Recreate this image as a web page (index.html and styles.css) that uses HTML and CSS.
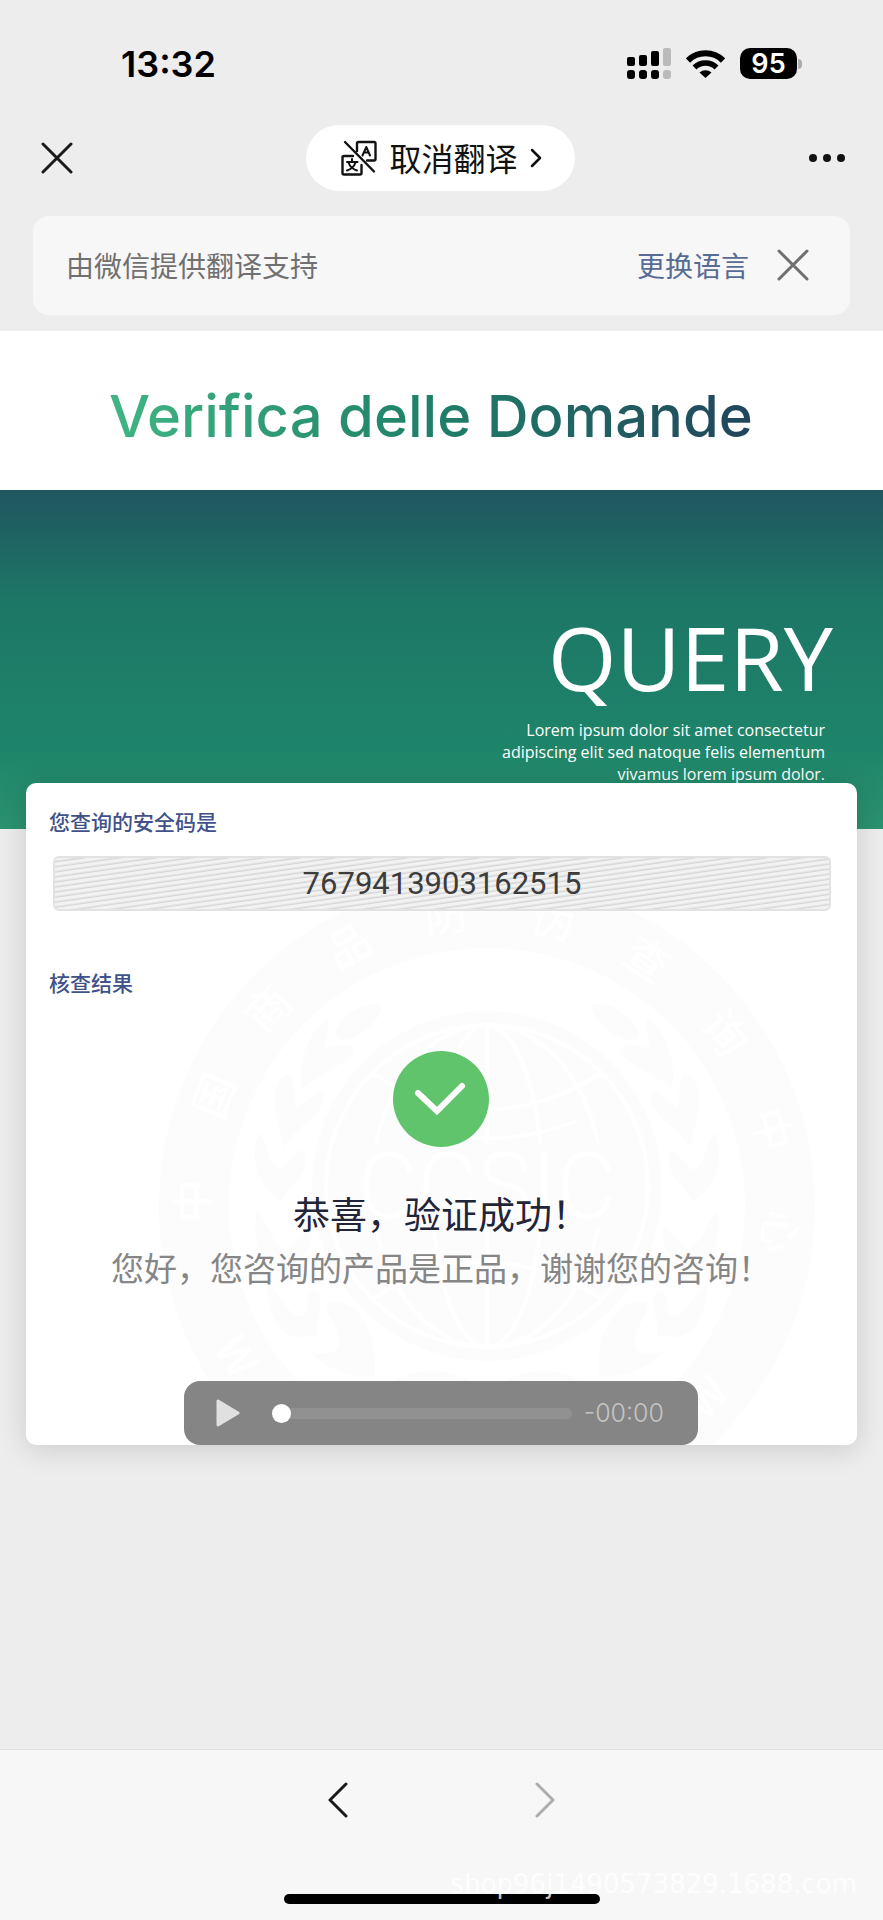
FILE: index.html
```html
<!DOCTYPE html>
<html lang="zh-CN">
<head>
    <meta charset="UTF-8">
    <meta name="viewport" content="width=device-width, initial-scale=1.0">
    <title>Verifica delle Domande</title>
    <link rel="stylesheet" href="styles.css">
</head>
<body>

    <div class="status-bar">
        <span class="time">13:32</span>
        <div class="status-icons">
            <svg width="44" height="31" viewBox="0 0 44 31">
                <g fill="#000">
                    <rect x="0" y="9" width="8" height="9" rx="2"/>
                    <rect x="12" y="7" width="8" height="11" rx="2"/>
                    <rect x="24" y="3" width="8" height="15" rx="2"/>
                    <rect x="0" y="22" width="8" height="9" rx="3"/>
                    <rect x="12" y="22" width="8" height="9" rx="3"/>
                    <rect x="24" y="22" width="8" height="9" rx="3"/>
                </g>
                <g fill="#bababa">
                    <rect x="36" y="0" width="8" height="18" rx="2"/>
                    <rect x="36" y="22" width="8" height="9" rx="3"/>
                </g>
            </svg>
            <svg class="wifi" width="39" height="28" viewBox="0 0 39 28">
                <path d="M2 10.500A25 25 0 0 1 37 10.500" fill="none" stroke="#000" stroke-width="6"/>
                <path d="M8.500 17.500A15.500 15.500 0 0 1 30.500 17.500" fill="none" stroke="#000" stroke-width="5.500"/>
                <path d="M13.500 22.500A9 9 0 0 1 25.500 22.500L19.500 28Z" fill="#000"/>
            </svg>
            <div class="battery"><span>95</span></div>
        </div>
    </div>

    <div class="nav-bar">
        <button class="icon-btn" aria-label="关闭">
            <svg width="32" height="32" viewBox="0 0 32 32"><path d="M2 2L30 30M30 2L2 30" stroke="#1a1a1a" stroke-width="3" stroke-linecap="round"/></svg>
        </button>
        <button class="translate-btn">
            <svg width="36" height="36" viewBox="0 0 36 36" fill="none" stroke="#111" stroke-width="2.400" stroke-linecap="round" stroke-linejoin="round">
                <path d="M16 11V3.500Q16 2 17.500 2H33Q34.500 2 34.500 3.500V19Q34.500 20.500 33 20.500H26"/>
                <path d="M12 16H3Q1.500 16 1.500 17.500V33Q1.500 34.500 3 34.500H19Q20.500 34.500 20.500 33V25"/>
                <path d="M4 2L33 31.500"/>
                <path d="M21.500 15.500L25.300 7L29 15.500M23 12.500H27.500" stroke-width="2"/>
                <path d="M11 19V21.500M6 22H16.500M7.500 22.500Q9.500 28.500 16 30.500M14.500 22.500Q12.500 28.500 6 30.500" stroke-width="2"/>
            </svg>
            <span>取消翻译</span>
            <svg width="12" height="20" viewBox="0 0 12 20" fill="none" stroke="#111" stroke-width="2.500" stroke-linecap="round" stroke-linejoin="round"><path d="M2 2L10 10L2 18"/></svg>
        </button>
        <button class="icon-btn" aria-label="更多">
            <svg width="38" height="10" viewBox="0 0 38 10" fill="#111"><circle cx="5" cy="5" r="4"/><circle cx="19" cy="5" r="4"/><circle cx="33" cy="5" r="4"/></svg>
        </button>
    </div>

    <div class="notice">
        <p>由微信提供翻译支持</p>
        <a href="#">更换语言</a>
        <button class="icon-btn" aria-label="关闭提示">
            <svg width="32" height="32" viewBox="0 0 32 32"><path d="M2 2L30 30M30 2L2 30" stroke="#707070" stroke-width="3" stroke-linecap="round"/></svg>
        </button>
    </div>

    <header class="site-header">
        <h1>Verifica delle Domande</h1>
    </header>

    <main>
        <section class="banner">
            <h2>QUERY</h2>
            <p>Lorem ipsum dolor sit amet consectetur<br>adipiscing elit sed natoque felis elementum<br>vivamus lorem ipsum dolor.</p>
        </section>

        <section class="card">
            <svg class="seal" width="656" height="656" viewBox="-328 -328 656 656" aria-hidden="true">
                <defs>
                    <g id="laurel">
                        <path d="M-105 -201C-120 -206 -146 -192 -152 -172C-150 -162 -136 -166 -124 -174C-114 -182 -104 -192 -105 -201Z"/>
                        <path d="M-159 -187C-178 -176 -190 -144 -185 -118C-172 -128 -148 -140 -135 -150C-130 -158 -136 -164 -148 -161L-162 -158C-162 -168 -158 -178 -159 -187Z"/>
                        <path d="M-197 -131C-208 -132 -214 -116 -212 -104C-212 -90 -206 -76 -204 -58C-192 -78 -170 -88 -164 -103C-162 -114 -168 -118 -176 -108L-191 -98C-194 -108 -190 -124 -197 -131Z"/>
                        <path d="M-229 -73C-234 -54 -234 -36 -222 -20C-216 -12 -210 -8 -205 -4C-200 -18 -184 -28 -182 -42C-180 -54 -184 -60 -190 -52L-206 -36C-222 -42 -216 -64 -229 -73Z"/>
                        <path d="M-230 6C-236 30 -226 56 -210 66L-196 78C-194 60 -180 50 -176 36C-174 22 -178 18 -184 28L-200 44C-218 36 -218 16 -230 6Z"/>
                        <path d="M-220 78C-220 104 -210 126 -194 130C-184 134 -176 126 -170 133C-172 112 -164 104 -168 88C-176 78 -180 92 -182 110C-200 112 -206 88 -220 78Z"/>
                        <path d="M-160 97C-156 94 -142 95 -132 104C-116 120 -110 142 -112 170C-128 172 -156 168 -176 146C-160 150 -146 148 -148 132C-150 118 -162 110 -160 97Z"/>
                        <path d="M-90 174C-70 160 -24 162 -8 184C-30 200 -70 204 -110 192Z"/>
                    </g>
                </defs>
                <circle r="293" fill="none" stroke="#fcfcfc" stroke-width="70"/>
                <g fill="#fcfcfc">
                    <use href="#laurel"/>
                    <use href="#laurel" transform="scale(-1 1)"/>
                    <circle cy="-20" r="175"/>
                </g>
                <g fill="none" stroke="#fff" stroke-width="4">
                    <circle cy="-20" r="161"/>
                    <ellipse cy="-20" rx="55" ry="161"/>
                    <ellipse cy="-20" rx="115" ry="161"/>
                    <path d="M0 -181V141M-115 -133Q0 -60 115 -133M-90 -85Q0 -50 90 -85M-115 93Q0 20 115 93"/>
                </g>
                <rect x="-140" y="-62" width="280" height="84" fill="#fcfcfc"/>
                <g fill="#fff" text-anchor="middle">
                    <text class="seal-name" y="12">CCSIC</text>
                    <g class="seal-ring">
                        <text transform="rotate(-89) translate(0 -278)">中</text>
                        <text transform="rotate(-68) translate(0 -278)">国</text>
                        <text transform="rotate(-48) translate(0 -278)">商</text>
                        <text transform="rotate(-28) translate(0 -278)">品</text>
                        <text transform="rotate(-8) translate(0 -278)">防</text>
                        <text transform="rotate(13) translate(0 -278)">伪</text>
                        <text transform="rotate(33) translate(0 -278)">查</text>
                        <text transform="rotate(54) translate(0 -278)">询</text>
                        <text transform="rotate(75) translate(0 -278)">中</text>
                        <text transform="rotate(95) translate(0 -278)">心</text>
                        <text transform="rotate(59) translate(0 308)">W</text>
                        <text transform="rotate(-49) translate(0 308)">W</text>
                    </g>
                </g>
            </svg>

            <label for="code">您查询的安全码是</label>
            <input id="code" class="code" type="text" value="7679413903162515" readonly>

            <h3>核查结果</h3>

            <div class="result">
                <svg width="98" height="98" viewBox="0 0 98 98">
                    <circle cx="49" cy="49" r="48" fill="#5fc46b"/>
                    <path d="M26 43L45 61L70 36" fill="none" stroke="#fff" stroke-width="6" stroke-linecap="round"/>
                </svg>
                <p class="result-title">恭喜，验证成功！</p>
                <p class="result-text">您好，您咨询的产品是正品，谢谢您的咨询！</p>
            </div>

            <div class="player">
                <button class="icon-btn" aria-label="播放">
                    <svg width="24" height="28" viewBox="0 0 24 28"><path d="M2 2L22 14L2 26Z" fill="#e0e0e0" stroke="#e0e0e0" stroke-width="3" stroke-linejoin="round"/></svg>
                </button>
                <input type="range" min="0" max="100" value="0" aria-label="播放进度">
                <span>-00:00</span>
            </div>
        </section>
    </main>

    <footer class="tool-bar">
        <div class="tool-buttons">
            <button class="icon-btn" aria-label="后退">
                <svg width="20" height="36" viewBox="0 0 20 36" fill="none" stroke="#1a1a1a" stroke-width="3" stroke-linecap="round" stroke-linejoin="round"><path d="M18 2L2 18L18 34"/></svg>
            </button>
            <button class="icon-btn" aria-label="前进" disabled>
                <svg width="20" height="36" viewBox="0 0 20 36" fill="none" stroke="#adadad" stroke-width="3" stroke-linecap="round" stroke-linejoin="round"><path d="M2 2L18 18L2 34"/></svg>
            </button>
        </div>
        <div class="home-bar"></div>
        <span class="watermark">shop96j1490573829.1688.com</span>
    </footer>

</body>
</html>
```
FILE: styles.css
```css
:root {
    --page-gray: #ededed;
    --bar-gray: #f7f7f7;
    --link-blue: #576b95;
    --label-blue: #41528a;
}

* {
    margin: 0;
    padding: 0;
    box-sizing: border-box;
}

body {
    background-color: var(--page-gray);
    font-family: "Noto Sans CJK SC", sans-serif;
    min-height: 100vh;
    display: flex;
    flex-direction: column;
}

svg {
    display: block;
}

button {
    border: none;
    background: none;
    font-family: inherit;
    cursor: pointer;
}

.status-bar {
    display: flex;
    justify-content: space-between;
    align-items: center;
    height: 125px;
    padding: 2px 81px 0 121px;
}

.time {
    font-family: Inter, sans-serif;
    font-size: 36px;
    font-weight: 600;
}

.status-icons {
    display: flex;
    align-items: center;
    gap: 15px;
}

.battery {
    position: relative;
    width: 57px;
    height: 31px;
    border-radius: 10px;
    background-color: #000;
    color: #fff;
    font-family: Inter, sans-serif;
    font-size: 27px;
    font-weight: 600;
    line-height: 31px;
    text-align: center;
    margin-right: 5px;
}

.battery::after {
    content: "";
    position: absolute;
    right: -5px;
    top: 11px;
    width: 4px;
    height: 10px;
    border-radius: 0 4px 4px 0;
    background-color: #adadad;
}

.nav-bar {
    display: flex;
    justify-content: space-between;
    align-items: center;
    padding: 0 37px 0 41px;
}

.translate-btn {
    display: flex;
    align-items: center;
    gap: 12px;
    height: 66px;
    padding: 0 33px 0 35px;
    border-radius: 33px;
    background-color: #fff;
    color: #111;
    font-size: 32px;
}

.translate-btn span {
    padding-bottom: 2px;
}

.notice {
    display: flex;
    align-items: center;
    margin: 25px 33px 16px;
    padding: 0 41px 2px 33px;
    height: 99px;
    border-radius: 16px;
    background-color: var(--bar-gray);
    font-size: 28px;
}

.notice p {
    flex: 1;
    color: #707070;
}

.notice a {
    color: var(--link-blue);
    text-decoration: none;
    margin-right: 28px;
}

.site-header {
    background-color: #fff;
    padding: 46px 24px 34px 109px;
    display: flex;
}

.site-header h1 {
    font-family: Inter, sans-serif;
    font-size: 58px;
    font-weight: 500;
    line-height: 79px;
    background: linear-gradient(90deg, #40b583, #1f8068 50%, #22445c);
    -webkit-background-clip: text;
    background-clip: text;
    color: transparent;
}

main {
    flex: 1;
}

.banner {
    height: 339px;
    padding: 112px 50px 0;
    background: linear-gradient(#205660, #1d7766 33%, #1e8469 75%, #2b9270);
    color: #fff;
    font-family: "Open Sans", sans-serif;
    text-align: right;
}

.banner h2 {
    font-size: 88px;
    font-weight: 400;
    line-height: 110px;
}

.banner p {
    font-size: 16px;
    line-height: 22px;
    padding: 7px 8px 0 0;
}

.card {
    position: relative;
    overflow: hidden;
    margin: -46px 26px 40px;
    padding: 22px 24px 0 23px;
    border-radius: 10px;
    background-color: #fff;
    box-shadow: 0 4px 30px rgba(0, 0, 0, 0.15);
}

.card > * {
    position: relative;
}

.card .seal {
    position: absolute;
    left: 133px;
    top: 95px;
}

.seal-name {
    font-family: Roboto, sans-serif;
    font-size: 92px;
    font-weight: 300;
}

.seal-ring {
    font-size: 44px;
    font-weight: 500;
}

.card label,
.card h3 {
    display: block;
    color: var(--label-blue);
    font-size: 21px;
    font-weight: 500;
    line-height: 32px;
}

.code {
    display: block;
    width: calc(100% - 6px);
    height: 55px;
    margin: 19px 0 55px 4px;
    border: 2px solid #e2e2e2;
    border-radius: 6px;
    background: repeating-linear-gradient(172deg, #f2f2f2 0, #f2f2f2 2px, #d6d6d6 4px, #f2f2f2 5px);
    color: #3c3c3c;
    font-family: Roboto, sans-serif;
    font-size: 31px;
    font-weight: 400;
    text-align: center;
}

.result {
    display: flex;
    flex-direction: column;
    align-items: center;
    margin-top: 52px;
}

.result-title {
    color: #222538;
    font-size: 37px;
    line-height: 54px;
    margin-top: 38px;
}

.result-text {
    color: #868686;
    font-size: 33px;
    line-height: 54px;
    white-space: nowrap;
}

.player {
    display: flex;
    align-items: center;
    width: 514px;
    max-width: 100%;
    height: 64px;
    margin: 87px auto 0;
    padding: 0 34px 0 32px;
    border-radius: 16px;
    background-color: #858585;
}

.player input {
    flex: 1;
    min-width: 0;
    appearance: none;
    height: 11px;
    margin: 0 12px 0 32px;
    border-radius: 6px;
    background-color: #919191;
}

.player input::-webkit-slider-thumb {
    appearance: none;
    width: 19px;
    height: 19px;
    border-radius: 50%;
    background-color: #fff;
}

.player span {
    color: #c4c4c4;
    font-family: Inter, sans-serif;
    font-size: 25px;
    font-weight: 300;
}

.tool-bar {
    position: relative;
    height: 171px;
    padding-top: 32px;
    border-top: 1px solid #e0e0e0;
    background-color: var(--bar-gray);
}

.tool-buttons {
    display: flex;
    justify-content: center;
    gap: 187px;
}

.home-bar {
    width: 316px;
    height: 10px;
    margin: 76px auto 0;
    border-radius: 5px;
    background-color: #000;
}

.watermark {
    position: absolute;
    right: 26px;
    bottom: 16px;
    color: rgba(255, 255, 255, 0.8);
    font-family: "DejaVu Sans", sans-serif;
    font-size: 26px;
    line-height: 40px;
}
```
